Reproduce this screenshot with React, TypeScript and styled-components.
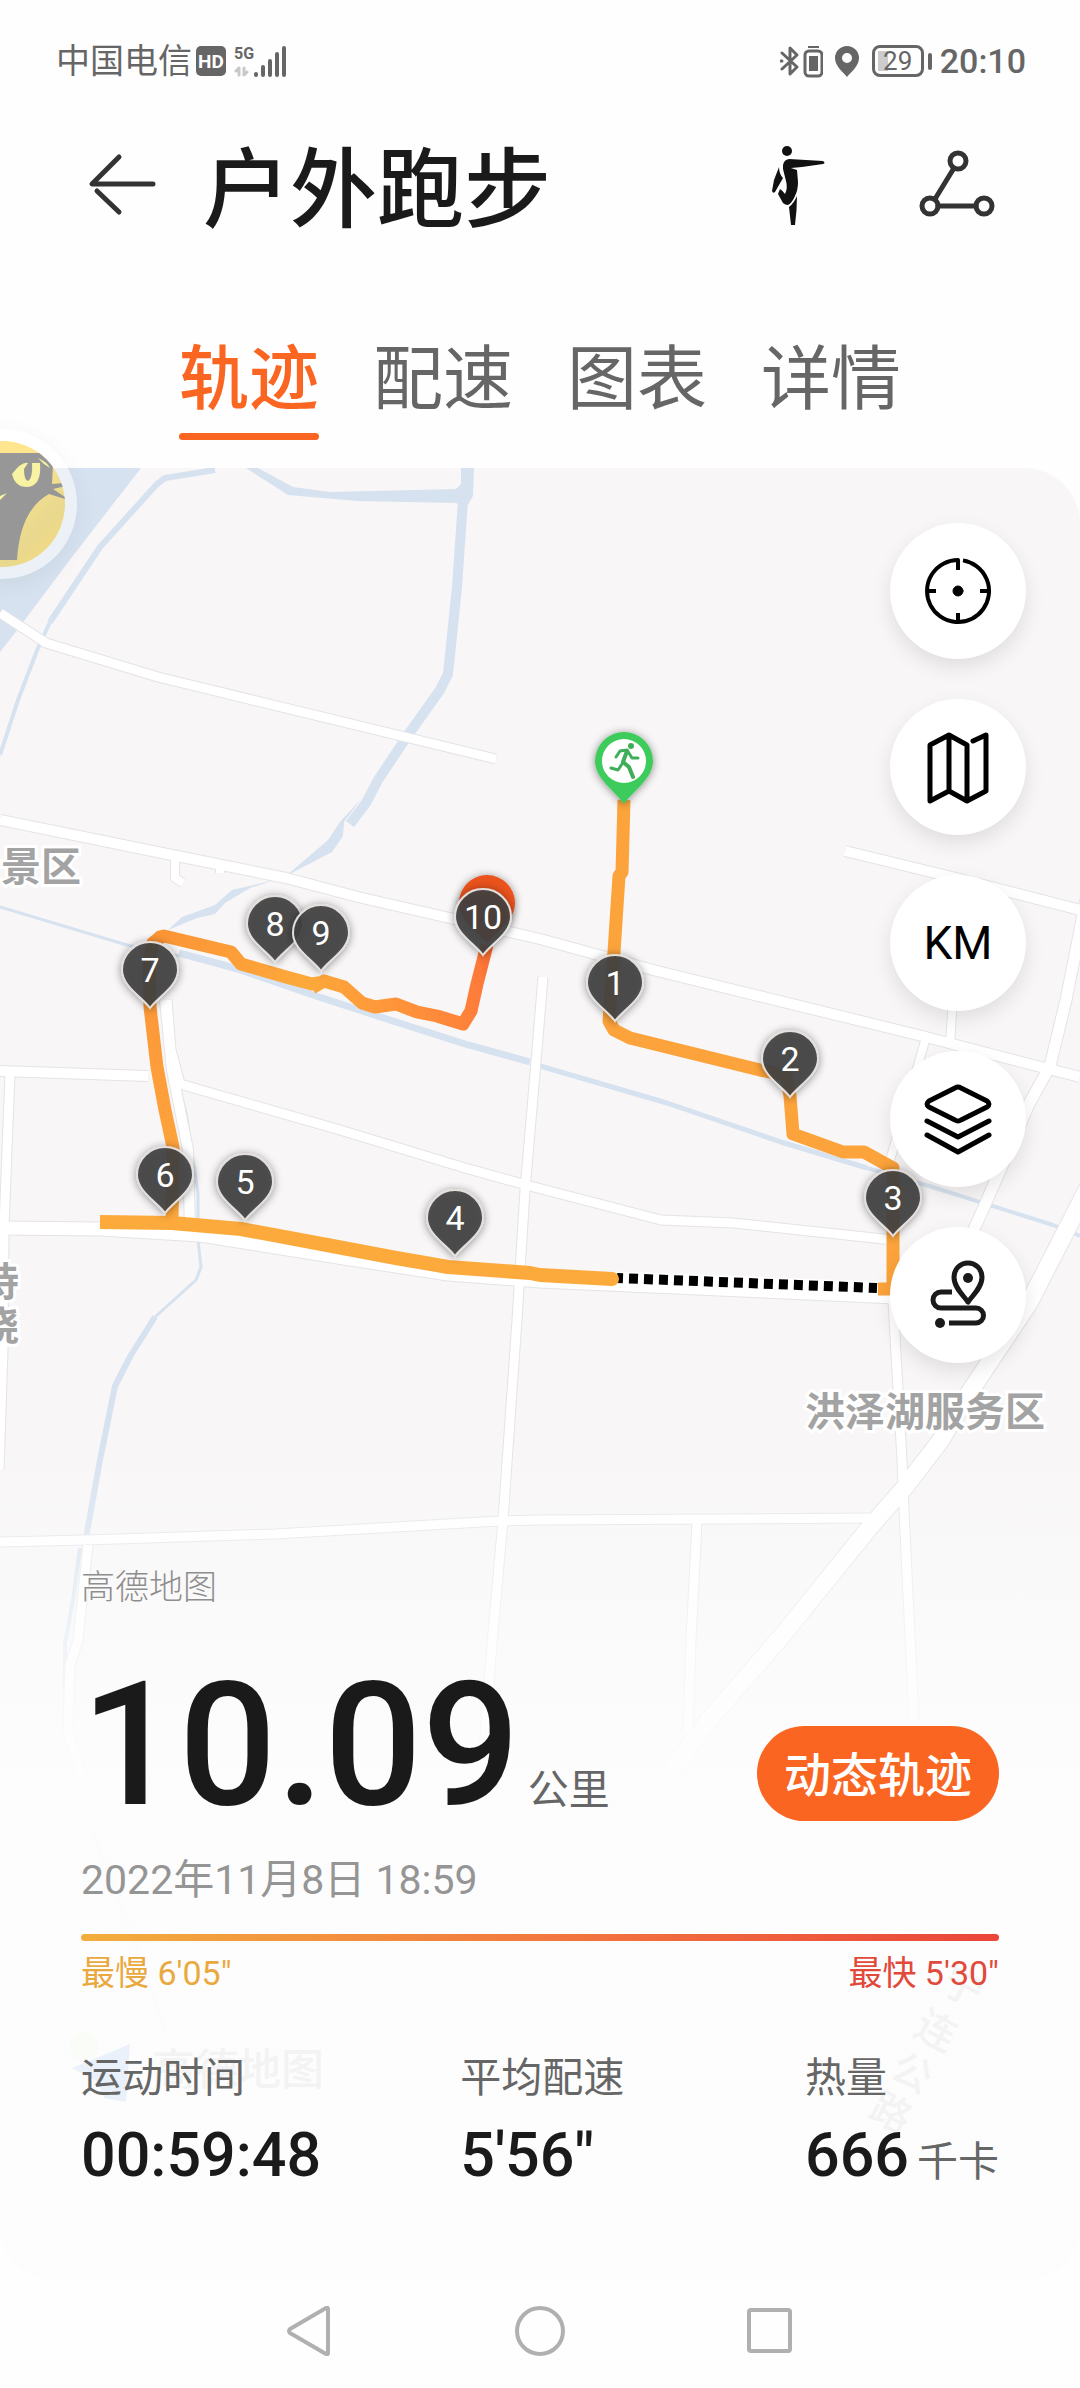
import React from 'react';
import styled, { createGlobalStyle } from 'styled-components';

const INK = '#1a1a1a';
const GRAY = '#666666';
const ACCENT = '#fb6522';

const GlobalStyle = createGlobalStyle`
  *, *::before, *::after { box-sizing: border-box; }
  body {
    margin: 0;
    background: #fefefe;
    color: ${INK};
    font-family: Roboto, "Noto Sans CJK SC", sans-serif;
  }
  button {
    margin: 0;
    padding: 0;
    border: 0;
    background: none;
    color: inherit;
    font: inherit;
    cursor: pointer;
  }
  svg { display: block; flex: none; }
  h1, h2, p, dl, dt, dd { margin: 0; font-weight: 400; }
`;

const Screen = styled.main`
  display: flex;
  flex-direction: column;
  overflow: hidden;
`;

/* ---------- status bar ---------- */

const StatusBar = styled.div`
  display: flex;
  justify-content: space-between;
  align-items: center;
  height: 122px;
  padding: 0 54px 0 56px;
  color: ${GRAY};
  font-size: 34px;
  line-height: 48px;
`;

const StatusGroup = styled.div<{ $gap: number }>`
  display: flex;
  align-items: center;
  gap: ${(p) => p.$gap}px;
`;

const HdBadge = styled.span`
  width: 30px;
  height: 30px;
  border-radius: 5px;
  background: ${GRAY};
  color: #fff;
  font-size: 19px;
  font-weight: 700;
  line-height: 31px;
  text-align: center;
`;

const Network = styled.span`
  display: flex;
  align-items: flex-end;
  padding-left: 4px;
`;

const NetworkType = styled.span`
  display: flex;
  flex-direction: column;
  gap: 4px;
  font-size: 16px;
  font-weight: 700;
  line-height: 16px;
`;

const Battery = styled.span`
  display: flex;
  align-items: center;
  gap: 4px;
  margin-left: 8px;

  &::after {
    content: "";
    width: 4px;
    height: 17px;
    border-radius: 2px;
    background: ${GRAY};
  }
`;

const BatteryLevel = styled.span`
  width: 52px;
  height: 32px;
  border: 3px solid ${GRAY};
  border-radius: 8px;
  background: linear-gradient(#ccc, #ccc) 3px 3px / 10px 20px no-repeat;
  font-size: 26px;
  line-height: 27px;
  text-align: center;
`;

const Clock = styled.time`
  margin-left: 4px;
  font-weight: 500;
`;

/* ---------- header and tabs ---------- */

const Header = styled.header`
  display: flex;
  align-items: center;
  height: 126px;
  padding: 0 82px 0 85px;
`;

const Title = styled.h1`
  flex: 1;
  padding: 12px 0 0 44px;
  font-size: 87px;
  font-weight: 500;
  line-height: 112px;
`;

const HeaderActions = styled.div`
  display: flex;
  align-items: center;
  gap: 83px;
`;

const Tabs = styled.nav`
  display: flex;
  justify-content: center;
  gap: 54px;
  padding: 84px 0 28px;
`;

const Tab = styled.button<{ $active: boolean }>`
  color: ${(p) => (p.$active ? ACCENT : GRAY)};
  font-size: 70px;
  font-weight: ${(p) => (p.$active ? 500 : 400)};
  line-height: 96px;

  &::after {
    content: "";
    display: block;
    height: 7px;
    margin-top: 5px;
    border-radius: 4px;
    background: ${(p) => (p.$active ? ACCENT : 'transparent')};
  }
`;

/* ---------- map panel ---------- */

const Panel = styled.section`
  position: relative;
  display: flex;
  flex-direction: column;
  padding: 55px 81px 89px;
`;

const MapCanvas = styled.svg`
  position: absolute;
  inset: 0;
  width: 100%;
  height: 100%;
  border-radius: 0 56px 56px 56px;
`;

const Avatar = styled.button`
  position: absolute;
  top: -39px;
  left: -73px;
  width: 150px;
  height: 150px;
  border-radius: 50%;
  box-shadow: 0 6px 24px rgba(0, 0, 0, 0.05);
`;

const Tools = styled.div`
  position: relative;
  display: flex;
  flex-direction: column;
  align-self: flex-end;
  gap: 40px;
  margin-right: -27px;
`;

const Tool = styled.button`
  display: grid;
  place-items: center;
  width: 136px;
  height: 136px;
  border-radius: 50%;
  background: #fff;
  box-shadow: 0 8px 20px rgba(0, 0, 0, 0.1);
  color: #000;
  font-size: 46px;
`;

const Summary = styled.div`
  position: relative;
  display: flex;
  flex-direction: column;
  margin-top: 200px;
`;

const Attribution = styled.p`
  color: #8e8e8e;
  font-size: 34px;
  font-weight: 300;
  line-height: 48px;
`;

const DistanceRow = styled.div`
  display: flex;
  justify-content: space-between;
  align-items: flex-end;
  margin-top: 48px;
`;

const Distance = styled.h2`
  display: flex;
  align-items: baseline;
  gap: 8px;
  font-size: 172px;
  font-weight: 500;
  line-height: 172px;
`;

const Unit = styled.span`
  color: ${GRAY};
  font-size: 41px;
  font-weight: 400;
  line-height: 48px;
`;

const ReplayButton = styled.button`
  height: 95px;
  margin-bottom: 10px;
  padding: 4px 27px 0;
  border-radius: 48px;
  background: ${ACCENT};
  color: #fff;
  font-size: 47px;
  font-weight: 500;
  line-height: 91px;
`;

const DateLine = styled.p`
  margin-top: 25px;
  color: #959595;
  font-size: 41px;
  line-height: 48px;
`;

const PaceBar = styled.div`
  height: 7px;
  margin-top: 30px;
  border-radius: 4px;
  background: linear-gradient(90deg, #f2ae3d, #f2763f 52%, #ea453a);
`;

const PaceRange = styled.div`
  display: flex;
  justify-content: space-between;
  margin-top: 8px;
  font-size: 34px;
  line-height: 48px;
`;

const Pace = styled.span<{ $color: string }>`
  color: ${(p) => p.$color};
`;

const Stats = styled.dl`
  display: grid;
  grid-template-columns: 11fr 10fr auto;
  margin-top: 57px;
`;

const StatLabel = styled.dt`
  color: ${GRAY};
  font-size: 41px;
  line-height: 48px;
`;

const StatValue = styled.dd`
  display: flex;
  align-items: baseline;
  gap: 8px;
  margin-top: 17px;
  font-size: 61px;
  font-weight: 500;
  line-height: 72px;
`;

const NavBar = styled.nav`
  display: flex;
  justify-content: center;
  gap: 180px;
  padding: 26px 0 32px;
`;

/* ---------- map data ---------- */

const waterways: { d: string; w: number }[] = [
  { d: 'M215 470 165 478 157 484 100 547 50 622', w: 6 },
  { d: 'M50 622 38 648 18 700 0 755', w: 4 },
  { d: 'M0 907 127 945 179 956', w: 3 },
  { d: 'M463 500 457 587 448 674 440 690 408 735 378 780 366 803 350 824', w: 10 },
  { d: 'M179 953 238 969 310 994 393 1021 465 1044 530 1062', w: 7 },
  { d: 'M540 1066 667 1103 781 1142 867 1168', w: 5 },
  { d: 'M867 1168 929 1186 1053 1225 1080 1236', w: 4 },
  { d: 'M162 1010 172 1065 186 1113 198 1193 198 1240 201 1267 196 1280 155 1317', w: 3 },
  { d: 'M155 1317 131 1355 115 1386 100 1460 86 1538', w: 6 },
  { d: 'M80 1548 73 1600 65 1644 65 1730 96 1840 130 1930 165 2030', w: 4 },
];

const roads: { d: string; w: number }[] = [
  { d: 'M0 613 46 643 158 677 496 759', w: 9 },
  { d: 'M0 820 172 855 286 878 358 897 454 919 540 939 657 971 922 1036 1029 1064 1080 1077', w: 10 },
  { d: 'M175 856 175 878 183 883', w: 8 },
  { d: 'M220 866 220 873', w: 8 },
  { d: 'M845 851 960 879 1080 910', w: 10 },
  { d: 'M1090 880 1066 1000 1050 1066 1029 1104 984 1207 960 1260', w: 11 },
  { d: 'M953 1000 950 1043', w: 8 },
  { d: 'M927 1034 908 1100 890 1160', w: 8 },
  { d: 'M543 977 537 1050 525 1190 517 1320 503 1520 492 1644 477 1840', w: 9 },
  { d: 'M0 1071 148 1076', w: 10 },
  { d: 'M10 1073 4 1227 3 1350 -1 1470', w: 9 },
  { d: 'M167 1000 171 1050 180 1084 340 1130 465 1168 530 1186 661 1220 733 1223 893 1240', w: 9 },
  { d: 'M165 1000 172 1070 188 1150 190 1230', w: 10 },
  { d: 'M0 1228 100 1229 200 1235 344 1258 448 1274 540 1281 895 1297', w: 13 },
  { d: 'M0 1542 86 1540 275 1534 499 1521 540 1520 870 1518', w: 9 },
  { d: 'M697 1523 691 1640 688 1733', w: 9 },
  { d: 'M88 1545 78 1640 70 1665 68 1730 96 1830', w: 9 },
  { d: 'M893 1300 902 1460 904 1510 914 1720', w: 9 },
  { d: 'M1090 1184 1029 1303 967 1396 941 1440 905 1487 870 1527 781 1637 709 1720 657 1790 568 1930', w: 17 },
];

const kmPins: { n: number; x: number; y: number }[] = [
  { n: 1, x: 615, y: 983 },
  { n: 2, x: 790, y: 1059 },
  { n: 3, x: 893, y: 1198 },
  { n: 4, x: 455, y: 1218 },
  { n: 5, x: 245, y: 1182 },
  { n: 6, x: 165, y: 1175 },
  { n: 7, x: 150, y: 970 },
  { n: 8, x: 275, y: 924 },
  { n: 9, x: 321, y: 933 },
  { n: 10, x: 483, y: 917 },
];

const MapLabel = styled.text`
  fill: #a3a3a3;
  stroke: #fff;
  stroke-width: 6px;
  paint-order: stroke;
  font-size: 40px;
  font-weight: 700;
`;

const FaintLabel = styled.text`
  fill: #f3f3f3;
  font-weight: 500;
  text-anchor: middle;
`;

const PinNumber = styled.text`
  fill: #fff;
  font-size: 34px;
  text-anchor: middle;
`;

const faintRoadName = [
  { c: '宁', x: 963, y: 1987 },
  { c: '连', x: 936, y: 2031 },
  { c: '公', x: 912, y: 2073 },
  { c: '路', x: 891, y: 2113 },
];

function RouteMap() {
  return (
    <MapCanvas viewBox="0 468 1080 1812" preserveAspectRatio="xMidYMin slice" aria-label="运动轨迹地图">
      <defs>
        <linearGradient id="fade" x1="0" y1="1440" x2="0" y2="1780" gradientUnits="userSpaceOnUse">
          <stop offset="0" stopColor="#fdfdfd" stopOpacity="0" />
          <stop offset="0.6" stopColor="#fdfdfd" stopOpacity="0.65" />
          <stop offset="1" stopColor="#fdfdfd" stopOpacity="0.95" />
        </linearGradient>
        <linearGradient id="finish" x1="312" y1="985" x2="486" y2="930" gradientUnits="userSpaceOnUse">
          <stop offset="0" stopColor="#fda83a" />
          <stop offset="0.45" stopColor="#fe923a" />
          <stop offset="0.9" stopColor="#fd7a3a" />
          <stop offset="1" stopColor="#f8682f" />
        </linearGradient>
        <linearGradient id="west" x1="162" y1="930" x2="300" y2="980" gradientUnits="userSpaceOnUse">
          <stop offset="0" stopColor="#fc9436" />
          <stop offset="1" stopColor="#fda83a" />
        </linearGradient>
        <linearGradient id="climb" x1="0" y1="1223" x2="0" y2="940" gradientUnits="userSpaceOnUse">
          <stop offset="0" stopColor="#fda83b" />
          <stop offset="0.5" stopColor="#fd9e3b" />
          <stop offset="1" stopColor="#fc9436" />
        </linearGradient>
        <filter id="pinShadow" x="-40%" y="-40%" width="180%" height="180%">
          <feDropShadow dx="0" dy="1" stdDeviation="4" floodColor="#000" floodOpacity="0.45" />
        </filter>
      </defs>

      <rect y="468" width="1080" height="1812" fill="#f8f6f7" />

      <g fill="#d6e2ef">
        <path d="M0 468H141L72 557 15 633 0 652Z" />
        <path d="M246 468H258L293 487 330 492 456 489 461 484 461 468H474L473 496 466 508 456 503 358 501 288 495Z" />
        <path d="M362 798 344 822 343 836 332 852 286 876 300 864 328 840 340 822Z" />
        <path d="M275 880 250 888 225 903 215 914 197 918 168 930 182 917 215 905 232 890Z" />
      </g>
      <g fill="none" stroke="#d6e2ef" strokeLinejoin="round">
        {waterways.map((r) => (
          <path key={r.d} d={r.d} strokeWidth={r.w} />
        ))}
      </g>

      <g fill="none" stroke="#e4e3e6" strokeLinejoin="round">
        {roads.map((r) => (
          <path key={r.d} d={r.d} strokeWidth={r.w + 2} />
        ))}
      </g>
      <g fill="none" stroke="#fff" strokeLinejoin="round">
        {roads.map((r) => (
          <path key={r.d} d={r.d} strokeWidth={r.w} />
        ))}
      </g>

      <MapLabel x="81" y="881" textAnchor="end">景区</MapLabel>
      <MapLabel x="19" y="1296" textAnchor="end">持</MapLabel>
      <MapLabel x="19" y="1340" textAnchor="end">晓</MapLabel>
      <MapLabel x="925" y="1426" textAnchor="middle">洪泽湖服务区</MapLabel>

      <g fill="none" strokeWidth="13" strokeLinejoin="round">
        <path d="M617 1278 880 1288" stroke="#fff" />
        <path d="M617 1278 877 1288" stroke="#000" strokeWidth="10" strokeDasharray="9 6" strokeDashoffset="3" />
        <path
          d="M624 800 622 872 619 876 614 952 609 1021 614 1030 630 1038 760 1070 786 1075 790 1096 793 1134 843 1152 864 1152 893 1168 893 1232 893 1289 878 1289"
          stroke="#fca33b"
        />
        <path d="M100 1222 172 1223 241 1229 327 1245 396 1258 448 1267 530 1273 540 1275 612 1279" stroke="#fdaa3c" strokeWidth="14" />
        <circle cx="612" cy="1279" r="7" fill="#fdaa3c" />
        <path d="M172 1223 173 1147 165 1110 157 1067 150 1007 149 960 153 943 162 936" stroke="url(#climb)" />
        <path d="M160 937 164 936 231 952 241 964 286 977 312 984 318 983" stroke="url(#west)" strokeLinecap="round" />
        <path
          d="M312 988 324 981 344 987 362 1003 375 1007 396 1004 417 1012 437 1016 463 1024 471 1011 477 984 487 945"
          stroke="url(#finish)"
        />
      </g>

      <path d="M487 943C475 930 459 919 459 903A28 28 0 0 1 515 903C515 919 499 930 487 943Z" fill="#ea521c" filter="url(#pinShadow)" />

      {kmPins.map((p) => (
        <g key={p.n} transform={`translate(${p.x} ${p.y})`}>
          <path
            d="M0 38C-8 27-28 16-28 0A28 28 0 0 1 28 0C28 16 8 27 0 38Z"
            fill="#404040"
            fillOpacity="0.9"
            stroke="#e2dfdd"
            strokeWidth="2"
            filter="url(#pinShadow)"
          />
          <PinNumber y="12">{p.n}</PinNumber>
        </g>
      ))}

      <g transform="translate(624 761)">
        <path d="M0 43C-8 31-29 18-29 0A29 29 0 0 1 29 0C29 18 8 31 0 43Z" fill="#3ecb5b" filter="url(#pinShadow)" />
        <circle r="22" fill="#fff" />
        <circle cx="7" cy="-15" r="3" fill="#3fae58" />
        <g fill="none" stroke="#3fae58" strokeWidth="2" strokeLinecap="round" strokeLinejoin="round">
          <path d="M-8-4-4-10 3-11 8-3 14-3" strokeWidth="3" />
          <path d="M3-10-1 1 5 6 9 16" strokeWidth="4" />
          <path d="M-2 3-6 9-13 7" strokeWidth="3" />
        </g>
      </g>

      <rect y="1440" width="1080" height="840" fill="url(#fade)" />

      <circle cx="84" cy="2046" r="14" fill="#f9fcf7" />
      <path d="M72 2068 130 2044 126 2102 104 2098 98 2082Z" fill="#eaf1fb" />
      <FaintLabel x="238" y="2085" fontSize="43">高德地图</FaintLabel>
      {faintRoadName.map((g) => (
        <g key={g.c} transform={`translate(${g.x} ${g.y}) rotate(28)`}>
          <FaintLabel y="14" fontSize="40">{g.c}</FaintLabel>
        </g>
      ))}
    </MapCanvas>
  );
}

/* ---------- icons ---------- */

const stroke = (color: string, width: number) => ({
  fill: 'none',
  stroke: color,
  strokeWidth: width,
  strokeLinecap: 'round' as const,
  strokeLinejoin: 'round' as const,
});

const SignalBars = () => (
  <svg width="32" height="31" viewBox="0 0 32 31" {...stroke(GRAY, 4)}>
    <path d="M2 28v1M9 21v8M16 15v14M23 8v21M30 2v27" />
  </svg>
);

const DataArrows = () => (
  <svg width="15" height="11" viewBox="0 0 15 11" {...stroke('#c8c8c8', 3)}>
    <path d="M5 9V2L2 5M10 2v7l3-3" />
  </svg>
);

const BluetoothIcon = () => (
  <svg width="19" height="32" viewBox="0 0 19 32" {...stroke(GRAY, 3)}>
    <path d="M2 8 17 22 10 29V3L17 10 2 24M1 16H2" />
  </svg>
);

const DeviceBattery = () => (
  <svg width="20" height="33" viewBox="0 0 20 33">
    <path d="M5 1h11v2H5z" fill={GRAY} />
    <rect x="2" y="6" width="17" height="25" rx="4" fill="none" stroke={GRAY} strokeWidth="3" />
    <path d="M6 11h9v15H6z" fill={GRAY} />
  </svg>
);

const LocationIcon = () => (
  <svg width="25" height="31" viewBox="0 0 25 31">
    <path d="M12 0A12 12 0 0 1 24 12C24 20 16 26 12 31 8 26 0 20 0 12A12 12 0 0 1 12 0ZM12 7a5 5 0 1 0 0 10 5 5 0 1 0 0-10Z" fill={GRAY} fillRule="evenodd" />
  </svg>
);

const BackIcon = () => (
  <svg width="74" height="70" viewBox="0 0 74 70" {...stroke('#333', 5)}>
    <path d="M34 7 7 34H68M12 41 34 62" />
  </svg>
);

const WarmdownIcon = () => (
  <svg width="70" height="90" viewBox="0 0 70 90" fill="#111">
    <circle cx="22" cy="11" r="5" />
    <path d="M24 19 58 21Q61 23 58 24L37 27 26 28 32 30 33 42Q33 50 30 56 27 63 23 65 20 65 18 63L13 54 15 49Q18 51 20 54 23 48 21 41L18 29Q17 20 24 19Z" />
    <path d="M14 27Q14 34 18 38L10 52Q8 54 7 51L9 40Z" />
    <path d="M32 56Q32 70 30 85H26L24 67Q29 63 32 56Z" />
  </svg>
);

const ShareIcon = () => (
  <svg width="80" height="90" viewBox="0 0 80 90" {...stroke('#333', 5)}>
    <circle cx="40" cy="21" r="8" />
    <circle cx="12" cy="66" r="8" />
    <circle cx="66" cy="66" r="8" />
    <path d="M36 28 17 59M20 66H58" />
  </svg>
);

const icon80 = { width: 80, height: 80, viewBox: '-40 -40 80 80' };

const TargetIcon = () => (
  <svg {...icon80} {...stroke('#000', 4)}>
    <path d="M5 -30.6A31 31 0 1 1 0 -31V-21M0 31V22M-31 0H-22M31 0H22" strokeLinecap="butt" />
    <circle r="5" fill="#000" strokeWidth="1" />
  </svg>
);

const MapIcon = () => (
  <svg {...icon80} {...stroke('#000', 5)}>
    <path d="M-28-22-9-32 9-22V34L-9 24-28 34ZM-9-32V24M9 34 28 24V-32L15-26" />
  </svg>
);

const LayersIcon = () => (
  <svg {...icon80} {...stroke('#000', 5)}>
    <path d="M-3-31Q0-33 3-31L29-18Q33-15 29-12L3 1Q0 3-3 1L-29-12Q-33-15-29-18ZM-31 2 0 18 31 2M-31 16 0 33 31 16" />
  </svg>
);

const TrackIcon = () => (
  <svg {...icon80} {...stroke('#1a1a1a', 5)}>
    <path d="M10 7C6 1-4-7-4-18A14 14 0 0 1 24-18C24-7 14 1 10 7Z" />
    <circle cx="10" cy="-17" r="5" fill="#1a1a1a" stroke="none" />
    <path d="M-6-3H-17A8 8 0 0 0-17 13H18A7 7 0 0 1 18 28H-9" strokeLinecap="butt" />
    <circle cx="-18" cy="28" r="5" fill="#1a1a1a" stroke="none" />
  </svg>
);

const CatIcon = () => (
  <svg width="150" height="150" viewBox="-73 429 150 150">
    <defs>
      <clipPath id="avatarClip">
        <circle cx="2" cy="504" r="63" />
      </clipPath>
      <linearGradient id="moon" x1="0" y1="0" x2="1" y2="1">
        <stop offset="0.4" stopColor="#ffe58e" />
        <stop offset="0.75" stopColor="#e8d88e" />
        <stop offset="1" stopColor="#fadc78" />
      </linearGradient>
    </defs>
    <circle cx="2" cy="504" r="75" fill="#fff" fillOpacity="0.5" />
    <g clipPath="url(#avatarClip)">
      <rect x="-61" y="441" width="126" height="126" fill="url(#moon)" />
      <path d="M-61 453H42L53 464 52 484 66 483V486L53 489 65 497V499L49 494Q20 510 17 560H-61Z" fill="#979797" />
      <path d="M12 474Q22 461 28 463L24 469Q24 480 28 481 33 478 32 463L40 463Q42 486 27 487 15 487 12 474Z" fill="#f8f2a3" />
      <path d="M38 458Q47 462 50 468L44 464ZM0 496 7 493 0 500Z" fill="#f8f2a3" />
    </g>
  </svg>
);

/* ---------- screen ---------- */

const tabs = ['轨迹', '配速', '图表', '详情'];

const stats = [
  { label: '运动时间', value: '00:59:48' },
  { label: '平均配速', value: '5\'56"' },
  { label: '热量', value: '666', unit: '千卡' },
];

export default function App() {
  const [active, setActive] = React.useState(tabs[0]);

  return (
    <Screen>
      <GlobalStyle />
      <StatusBar>
        <StatusGroup $gap={4}>
          <span>中国电信</span>
          <HdBadge>HD</HdBadge>
          <Network>
            <NetworkType>
              5G
              <DataArrows />
            </NetworkType>
            <SignalBars />
          </Network>
        </StatusGroup>
        <StatusGroup $gap={4}>
          <BluetoothIcon />
          <StatusGroup $gap={12}>
            <DeviceBattery />
            <LocationIcon />
          </StatusGroup>
          <Battery>
            <BatteryLevel>29</BatteryLevel>
          </Battery>
          <Clock>20:10</Clock>
        </StatusGroup>
      </StatusBar>

      <Header>
        <button aria-label="返回"><BackIcon /></button>
        <Title>户外跑步</Title>
        <HeaderActions>
          <button aria-label="拉伸"><WarmdownIcon /></button>
          <button aria-label="分享"><ShareIcon /></button>
        </HeaderActions>
      </Header>

      <Tabs>
        {tabs.map((t) => (
          <Tab key={t} $active={t === active} onClick={() => setActive(t)}>
            {t}
          </Tab>
        ))}
      </Tabs>

      <Panel>
        <RouteMap />
        <Avatar aria-label="悬浮助手"><CatIcon /></Avatar>
        <Tools>
          <Tool aria-label="定位"><TargetIcon /></Tool>
          <Tool aria-label="地图类型"><MapIcon /></Tool>
          <Tool>KM</Tool>
          <Tool aria-label="图层"><LayersIcon /></Tool>
          <Tool aria-label="路线"><TrackIcon /></Tool>
        </Tools>

        <Summary>
          <Attribution>高德地图</Attribution>
          <DistanceRow>
            <Distance>
              10.09
              <Unit>公里</Unit>
            </Distance>
            <ReplayButton>动态轨迹</ReplayButton>
          </DistanceRow>
          <DateLine>2022年11月8日 18:59</DateLine>
          <PaceBar />
          <PaceRange>
            <Pace $color="#eaa93f">最慢 6'05"</Pace>
            <Pace $color="#e1493b">最快 5'30"</Pace>
          </PaceRange>
          <Stats>
            {stats.map((s) => (
              <div key={s.label}>
                <StatLabel>{s.label}</StatLabel>
                <StatValue>
                  {s.value}
                  {s.unit && <Unit>{s.unit}</Unit>}
                </StatValue>
              </div>
            ))}
          </Stats>
        </Summary>
      </Panel>

      <NavBar>
        <button aria-label="返回键">
          <svg width="50" height="50" viewBox="0 0 50 50" {...stroke('#b0b0b0', 4)}>
            <path d="M43 3V47Q43 49 41 48L5 27Q3 25 5 23L41 2Q43 1 43 3Z" />
          </svg>
        </button>
        <button aria-label="主屏幕">
          <svg width="50" height="50" viewBox="0 0 50 50" {...stroke('#b0b0b0', 4)}>
            <circle cx="25" cy="25" r="23" />
          </svg>
        </button>
        <button aria-label="多任务">
          <svg width="50" height="50" viewBox="0 0 50 50" {...stroke('#b0b0b0', 4)}>
            <rect x="4" y="4" width="41" height="41" rx="2" />
          </svg>
        </button>
      </NavBar>
    </Screen>
  );
}
